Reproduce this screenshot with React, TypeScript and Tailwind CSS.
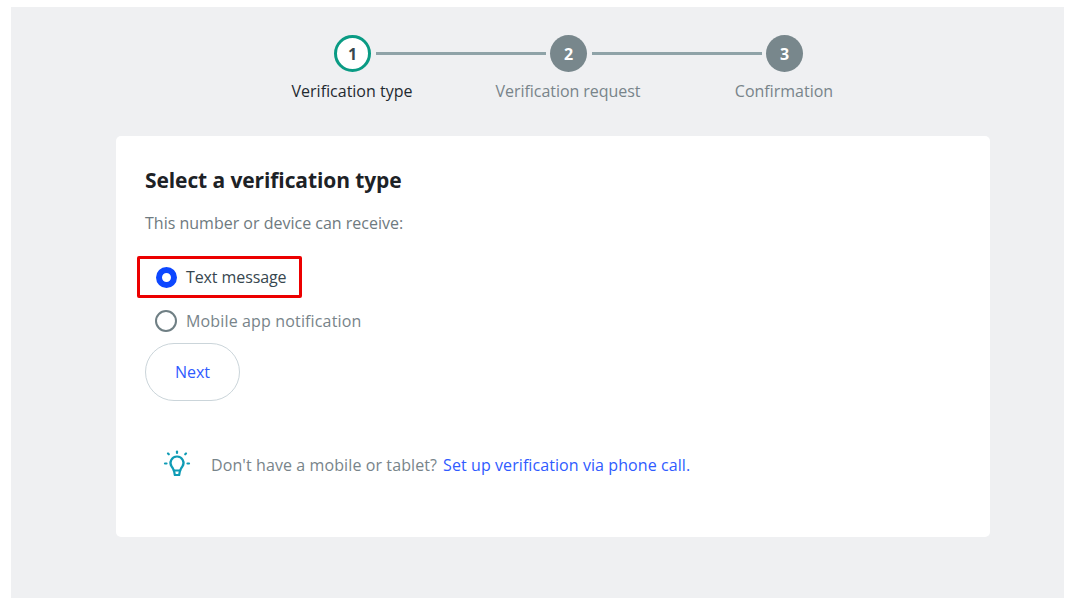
export default function App() {
  const font = { fontFamily: '"Open Sans", "Noto Sans", sans-serif' };
  return (
    <div className="w-[1068px] h-[608px] bg-white pt-[7px] pl-[11px] overflow-hidden" style={font}>
      <div className="w-[1053px] h-[591px] bg-[#eff0f2] flex flex-col items-start pt-[28px]">
        <div className="flex items-center ml-[323px]">
          <div className="w-[37px] h-[37px] rounded-full border-[3.5px] border-[#0a9b84] bg-white flex items-center justify-center text-[16px] font-bold text-[#37474f]">1</div>
          <div className="w-[170px] h-[3px] ml-[5px] mr-[4px] bg-[#8fa3a8]" />
          <div className="w-[37px] h-[37px] rounded-full bg-[#78878c] flex items-center justify-center text-[16px] font-bold text-white">2</div>
          <div className="w-[170px] h-[3px] ml-[5px] mr-[4px] bg-[#8fa3a8]" />
          <div className="w-[37px] h-[37px] rounded-full bg-[#78878c] flex items-center justify-center text-[16px] font-bold text-white">3</div>
        </div>
        <div className="flex ml-[233px] mt-[8px] text-[16px] leading-[22px]">
          <div className="w-[216px] text-center text-[#1f2a30]">Verification type</div>
          <div className="w-[216px] text-center text-[#78848a] tracking-[-0.05px]">Verification request</div>
          <div className="w-[216px] text-center text-[#78848a]">Confirmation</div>
        </div>
        <div className="w-[874px] h-[401px] ml-[105px] mt-[34px] bg-white rounded-[5px] pl-[29px] pt-[30px]">
          <h1 className="text-[21px] leading-[28px] font-bold text-[#1d2226] tracking-[-0.1px]">Select a verification type</h1>
          <p className="mt-[19px] text-[16px] leading-[20px] text-[#6e7a80]">This number or device can receive:</p>
          <div className="mt-[23px] -ml-[8px] w-[165px] h-[42px] border-[3px] border-[#ec0000] rounded-[2px] flex items-center pl-[16px] gap-[9px]">
            <span className="w-[21px] h-[21px] rounded-full border-[6px] border-[#0d47ff] bg-white shrink-0" />
            <span className="text-[16px] text-[#37474f] tracking-[-0.1px]">Text message</span>
          </div>
          <div className="mt-[12px] flex items-center gap-[9px] pl-[10px] h-[22px]">
            <span className="w-[22px] h-[22px] rounded-full border-[2.5px] border-[#6f7f84] bg-white shrink-0" />
            <span className="text-[16px] text-[#78848a] tracking-[0.15px]">Mobile app notification</span>
          </div>
          <button className="mt-[11px] w-[95px] h-[58px] rounded-full border border-[#cbd5da] bg-white text-[16px] text-[#2f5bff] block">Next</button>
          <div className="mt-[48px] ml-[16px] flex items-center">
            <svg width="32" height="32" viewBox="0 0 32 32" fill="none" stroke="#0f9bb5" strokeWidth="2.2" strokeLinecap="round" strokeLinejoin="round">
              <path d="M16 2.5v1.5" />
              <path d="M7 4.5l.8.8" />
              <path d="M25 4.5l-.8.8" />
              <path d="M4 14.5h1.5" />
              <path d="M26.5 14.5H28" />
              <path d="M12.7 21.5c-.3-1.8-1.2-2.8-2-3.9A6.4 6.4 0 0 1 16 7.5a6.4 6.4 0 0 1 5.3 10.1c-.8 1.1-1.7 2.1-2 3.9z" />
              <path d="M13 21.5l.8 4.5h4.4l.8-4.5" />
            </svg>
            <span className="ml-[18px] text-[16px] text-[#78848a] tracking-[0.1px]">Don't have a mobile or tablet?</span>
            <span className="ml-[6px] text-[16px] text-[#2f5bff] tracking-[0.08px]">Set up verification via phone call.</span>
          </div>
        </div>
      </div>
    </div>
  );
}
